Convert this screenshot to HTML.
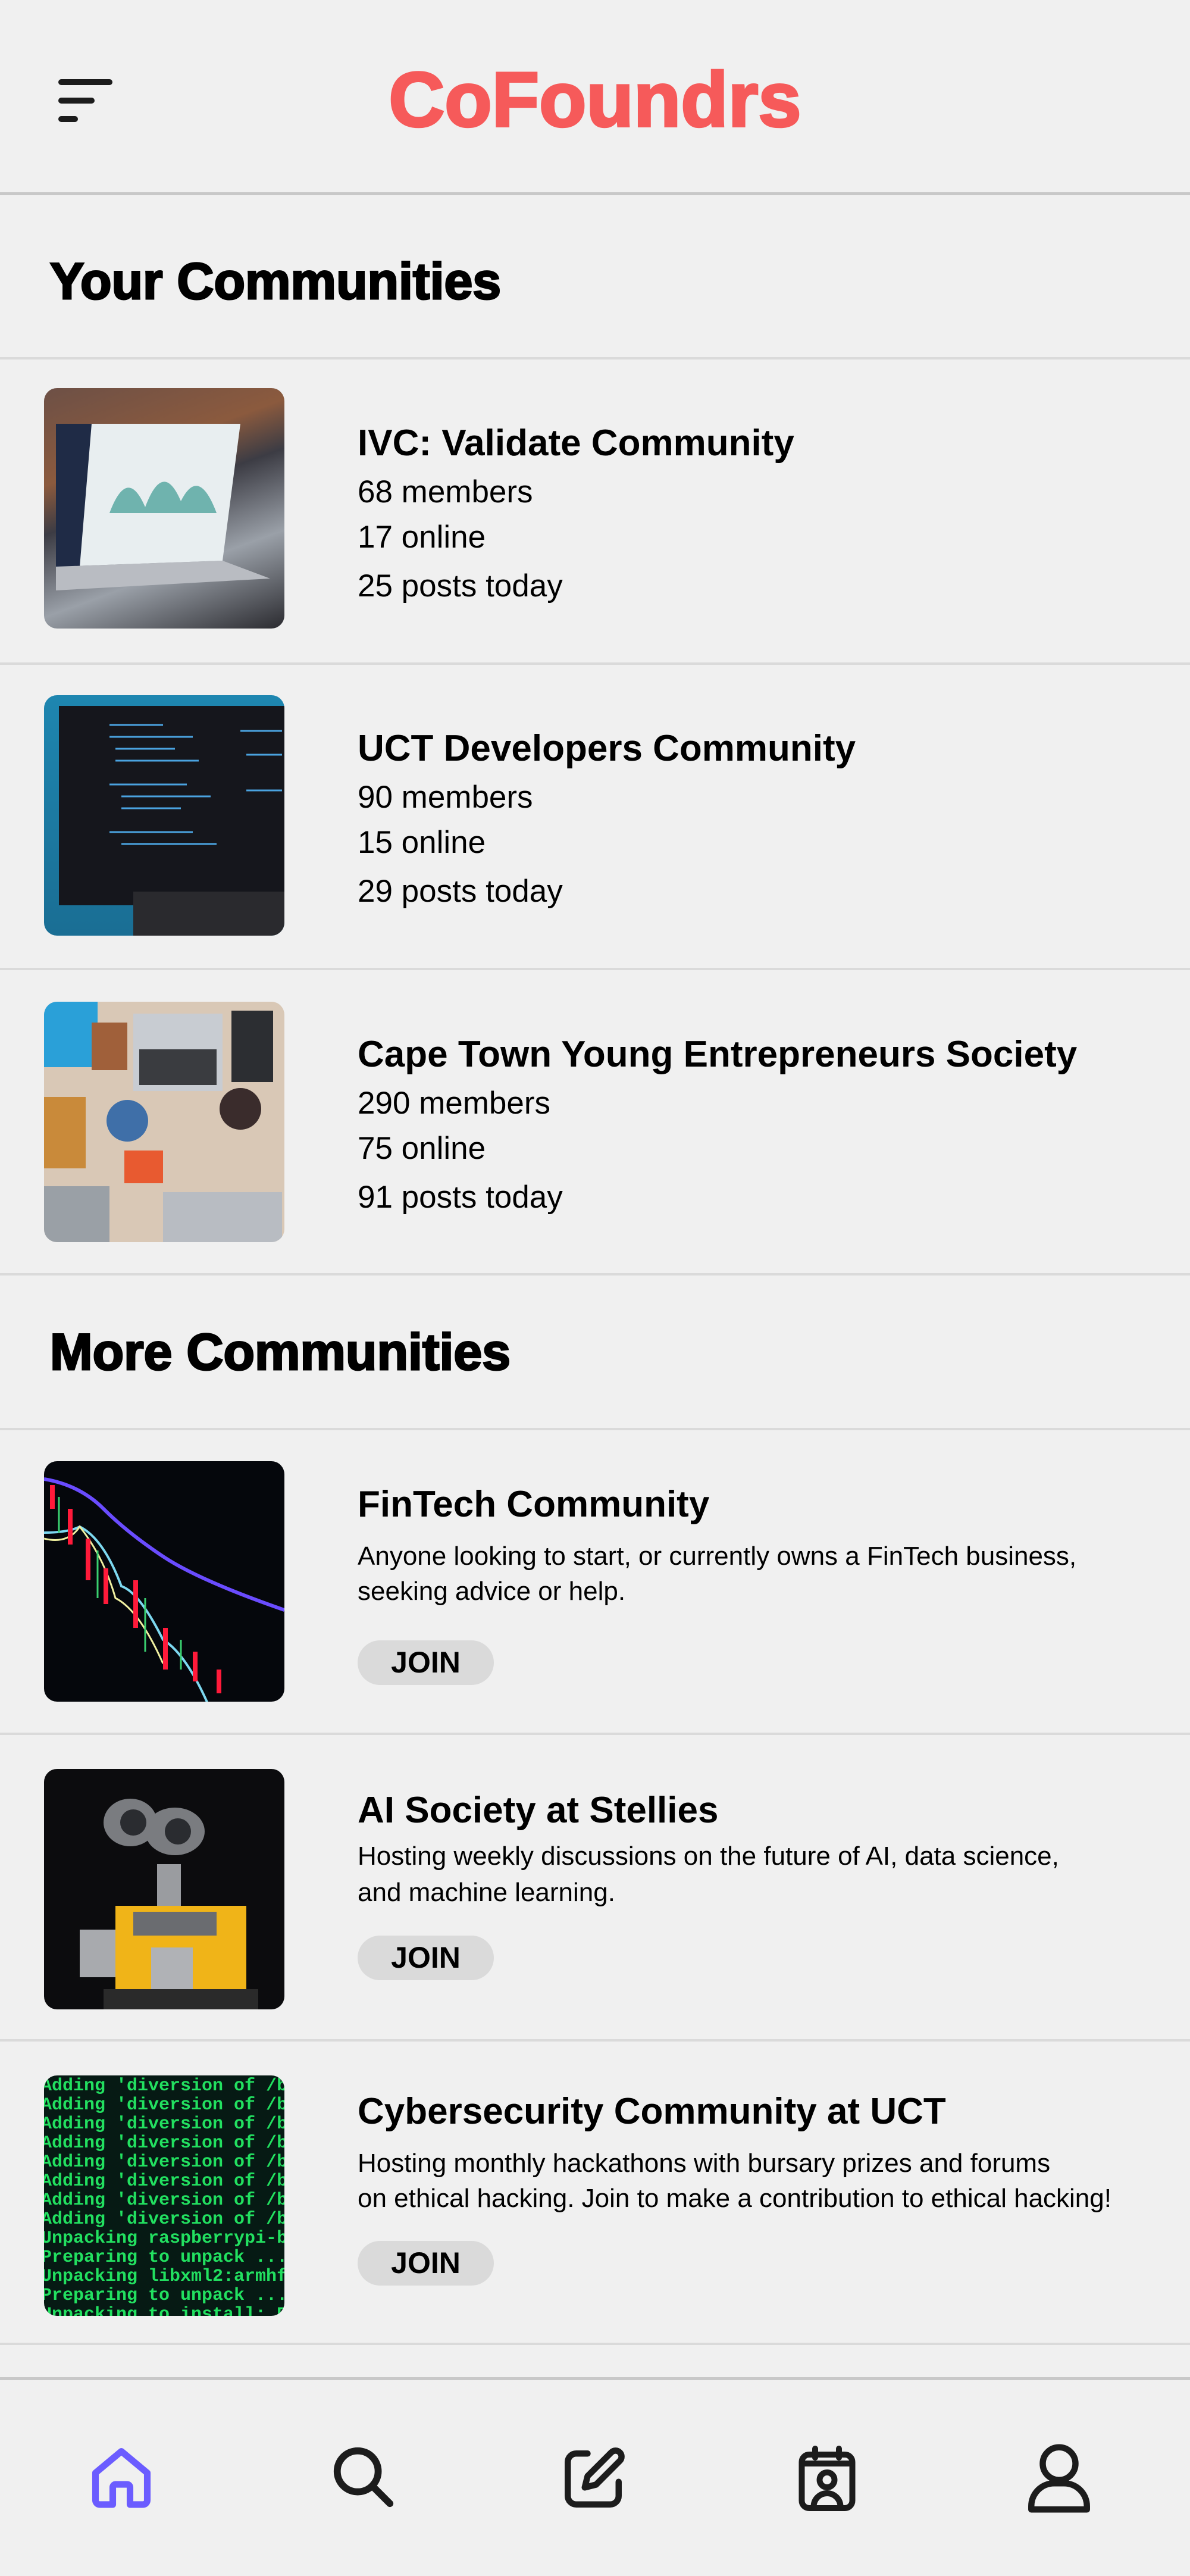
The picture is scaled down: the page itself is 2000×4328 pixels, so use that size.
<!DOCTYPE html>
<html><head><meta charset="utf-8">
<style>
*{margin:0;padding:0;box-sizing:border-box}
html,body{width:2000px;height:4328px;background:#f0f0f0;overflow:hidden;font-family:"Liberation Sans",sans-serif;color:#000}
.abs{position:absolute}
.hr{position:absolute;left:0;width:2000px;height:4px;background:#dadada}
.logo{position:absolute;left:0;width:2000px;top:97px;text-align:center;font-size:130px;font-weight:900;color:#f65a5a;letter-spacing:0px;line-height:140px;-webkit-text-stroke:4px #f65a5a}
.h2{position:absolute;left:84px;font-size:86px;font-weight:900;letter-spacing:0px;line-height:1;-webkit-text-stroke:3px #000}
.img{position:absolute;left:74px;width:404px;height:404px;border-radius:22px;overflow:hidden}
.t{position:absolute;left:601px;font-size:62px;font-weight:700;line-height:1;white-space:nowrap}
.s{position:absolute;left:601px;font-size:53px;line-height:1;white-space:nowrap}
.d{position:absolute;left:601px;font-size:44px;line-height:1;white-space:nowrap}
.join{position:absolute;left:601px;width:229px;height:75px;border-radius:38px;background:#dadada;font-size:50px;font-weight:700;text-align:center;line-height:75px}
svg.ic{position:absolute}
</style></head><body>

<div class="abs" style="left:98px;top:133px;width:91px;height:10px;border-radius:5px;background:#1c1c1c"></div>
<div class="abs" style="left:98px;top:164px;width:61px;height:10px;border-radius:5px;background:#1c1c1c"></div>
<div class="abs" style="left:98px;top:195px;width:33px;height:10px;border-radius:5px;background:#1c1c1c"></div>
<div class="logo">CoFoundrs</div>
<div class="hr" style="top:323px;height:5px;background:#c8c8c8"></div>

<div class="h2" style="top:430px">Your Communities</div>
<div class="hr" style="top:600px"></div>

<div class="img" style="top:652px;background:linear-gradient(160deg,#6d5046 0%,#8b5a3e 30%,#3c3c44 45%,#9aa0a8 70%,#2b2b30 100%)">
<svg width="404" height="404" viewBox="0 0 404 404"><polygon points="20,60 330,60 300,290 20,300" fill="#e8eef0"/><polygon points="20,60 80,60 60,300 20,300" fill="#1f2b46"/><path d="M110 210 Q140 130 170 200 Q200 120 230 190 Q260 130 290 210 Z" fill="#6fb3ae"/><polygon points="20,300 300,290 380,320 20,340" fill="#b9bcc2"/></svg></div>
<div class="t" style="top:714px">IVC: Validate Community</div>
<div class="s" style="top:800px">68 members</div>
<div class="s" style="top:876px">17 online</div>
<div class="s" style="top:958px">25 posts today</div>
<div class="hr" style="top:1113px"></div>

<div class="img" style="top:1168px;background:linear-gradient(180deg,#1e86b0,#1a6e94)">
<svg width="404" height="404" viewBox="0 0 404 404"><rect x="25" y="18" width="379" height="335" fill="#15161c"/><g stroke="#4aa3e0" stroke-width="3"><line x1="110" y1="50" x2="200" y2="50"/><line x1="110" y1="70" x2="250" y2="70"/><line x1="120" y1="90" x2="220" y2="90"/><line x1="120" y1="110" x2="260" y2="110"/><line x1="110" y1="150" x2="240" y2="150"/><line x1="130" y1="170" x2="280" y2="170"/><line x1="130" y1="190" x2="230" y2="190"/><line x1="110" y1="230" x2="250" y2="230"/><line x1="130" y1="250" x2="290" y2="250"/><line x1="330" y1="60" x2="400" y2="60"/><line x1="340" y1="100" x2="400" y2="100"/><line x1="340" y1="160" x2="400" y2="160"/></g><rect x="150" y="330" width="254" height="74" fill="#2a2a2e"/></svg></div>
<div class="t" style="top:1227px">UCT Developers Community</div>
<div class="s" style="top:1313px">90 members</div>
<div class="s" style="top:1389px">15 online</div>
<div class="s" style="top:1471px">29 posts today</div>
<div class="hr" style="top:1626px"></div>

<div class="img" style="top:1683px;background:#d9c8b6">
<svg width="404" height="404" viewBox="0 0 404 404"><rect x="0" y="0" width="90" height="110" fill="#2aa0d8"/><rect x="80" y="35" width="60" height="80" fill="#a0603a"/><rect x="150" y="20" width="150" height="130" fill="#c8ccd2"/><rect x="160" y="80" width="130" height="60" fill="#3a3c40"/><rect x="315" y="15" width="70" height="120" fill="#2c2e32"/><rect x="0" y="160" width="70" height="120" fill="#c98a3a"/><circle cx="140" cy="200" r="35" fill="#3f6fa8"/><rect x="135" y="250" width="65" height="55" fill="#e85a30"/><circle cx="330" cy="180" r="35" fill="#3a2c2c"/><rect x="0" y="310" width="110" height="94" fill="#9aa0a6"/><rect x="200" y="320" width="200" height="84" fill="#b8bcc2"/></svg></div>
<div class="t" style="top:1741px">Cape Town Young Entrepreneurs Society</div>
<div class="s" style="top:1827px">290 members</div>
<div class="s" style="top:1903px">75 online</div>
<div class="s" style="top:1985px">91 posts today</div>
<div class="hr" style="top:2139px"></div>

<div class="h2" style="top:2229px">More Communities</div>
<div class="hr" style="top:2399px"></div>

<div class="img" style="top:2455px;background:#05070c">
<svg width="404" height="404" viewBox="0 0 404 404"><path d="M0 70 Q60 80 100 120 T200 200 T404 290" stroke="#6a4cff" stroke-width="6" fill="none" transform="translate(0,-40)"/><path d="M0 150 Q40 150 60 140 Q100 160 130 240 Q160 250 200 330 Q250 360 300 500" stroke="#7dd8f0" stroke-width="4" fill="none" transform="translate(0,-30)"/><path d="M0 150 Q40 160 60 130 Q100 180 120 250 Q160 270 200 360" stroke="#f0f0a0" stroke-width="3" fill="none" transform="translate(0,-20)"/><g fill="#ff1a3a"><rect x="10" y="40" width="8" height="40"/><rect x="40" y="80" width="8" height="60"/><rect x="70" y="130" width="8" height="70"/><rect x="100" y="180" width="8" height="60"/><rect x="150" y="200" width="8" height="80"/><rect x="200" y="280" width="8" height="70"/><rect x="250" y="320" width="8" height="50"/><rect x="290" y="350" width="8" height="40"/></g><g stroke="#3ad070" stroke-width="3"><line x1="25" y1="60" x2="25" y2="120"/><line x1="90" y1="150" x2="90" y2="230"/><line x1="170" y1="230" x2="170" y2="320"/><line x1="230" y1="300" x2="230" y2="350"/></g></svg></div>
<div class="t" style="top:2497px">FinTech Community</div>
<div class="d" style="top:2593px">Anyone looking to start, or currently owns a FinTech business,</div>
<div class="d" style="top:2652px">seeking advice or help.</div>
<div class="join" style="top:2756px">JOIN</div>
<div class="hr" style="top:2911px"></div>

<div class="img" style="top:2972px;background:#0c0c0e">
<svg width="404" height="404" viewBox="0 0 404 404"><ellipse cx="145" cy="90" rx="45" ry="40" fill="#7a7c80"/><ellipse cx="220" cy="105" rx="50" ry="40" fill="#7a7c80"/><circle cx="150" cy="90" r="22" fill="#2a2c30"/><circle cx="225" cy="105" r="22" fill="#2a2c30"/><rect x="190" y="160" width="40" height="90" fill="#9a9ca0"/><rect x="120" y="230" width="220" height="150" fill="#f0b418"/><rect x="150" y="240" width="140" height="40" fill="#6a6c70"/><rect x="60" y="270" width="60" height="80" fill="#a8aaae"/><rect x="180" y="300" width="70" height="104" fill="#b0b2b6"/><rect x="100" y="370" width="260" height="34" fill="#2a2a2a"/></svg></div>
<div class="t" style="top:3011px">AI Society at Stellies</div>
<div class="d" style="top:3097px">Hosting weekly discussions on the future of AI, data science,</div>
<div class="d" style="top:3158px">and machine learning.</div>
<div class="join" style="top:3252px">JOIN</div>
<div class="hr" style="top:3426px"></div>

<div class="img" style="top:3487px;background:#061a14">
<svg width="404" height="404" viewBox="0 0 404 404"><g fill="#22e060" font-family="Liberation Mono,monospace" font-weight="bold" font-size="30"><text x="-5" y="25">Adding 'diversion of /boot/</text><text x="-5" y="57">Adding 'diversion of /boot/</text><text x="-5" y="89">Adding 'diversion of /boot/</text><text x="-5" y="121">Adding 'diversion of /boot/</text><text x="-5" y="153">Adding 'diversion of /boot/</text><text x="-5" y="185">Adding 'diversion of /boot/</text><text x="-5" y="217">Adding 'diversion of /boot/</text><text x="-5" y="249">Adding 'diversion of /boot/</text><text x="-5" y="281">Unpacking raspberrypi-bootl</text><text x="-5" y="313">Preparing to unpack .../18-</text><text x="-5" y="345">Unpacking libxml2:armhf (2.9</text><text x="-5" y="377">Preparing to unpack .../19-</text><text x="-5" y="409">Unpacking to install: Pre</text></g></svg></div>
<div class="t" style="top:3517px">Cybersecurity Community at UCT</div>
<div class="d" style="top:3613px">Hosting monthly hackathons with bursary prizes and forums</div>
<div class="d" style="top:3672px">on ethical hacking. Join to make a contribution to ethical hacking!</div>
<div class="join" style="top:3765px">JOIN</div>
<div class="hr" style="top:3936px"></div>

<div class="hr" style="top:3994px;height:5px;background:#c8c8c8"></div>
<svg class="ic" style="left:146px;top:4100px" width="116" height="124" viewBox="0 0 24 24" fill="none" stroke="#6b5cff" stroke-width="2.3" stroke-linecap="round" stroke-linejoin="round"><path d="M3 10.5 12 3l9 7.5V20a1.5 1.5 0 0 1-1.5 1.5H15v-6a1 1 0 0 0-1-1h-4a1 1 0 0 0-1 1v6H4.5A1.5 1.5 0 0 1 3 20z"/></svg>
<svg class="ic" style="left:552px;top:4103px" width="118" height="118" viewBox="0 0 24 24" fill="none" stroke="#1c1c1c" stroke-width="2.4" stroke-linecap="round"><circle cx="10" cy="10" r="7"/><path d="M15.2 15.2 21 21"/></svg>
<svg class="ic" style="left:940px;top:4108px" width="114" height="114" viewBox="0 0 24 24" fill="none" stroke="#1c1c1c" stroke-width="2.2" stroke-linecap="round" stroke-linejoin="round"><path d="M10 3H6a3 3 0 0 0-3 3v12a3 3 0 0 0 3 3h12a3 3 0 0 0 3-3v-5"/><path d="M18.4 2.6a2 2 0 0 1 3 3L13 14l-4 1 1-4z"/></svg>
<svg class="ic" style="left:1330px;top:4104px" width="120" height="120" viewBox="0 0 24 24" fill="none" stroke="#1c1c1c" stroke-width="2" stroke-linecap="round" stroke-linejoin="round"><rect x="3.5" y="4" width="17" height="18" rx="2.5"/><path d="M8 2v3M16 2v3M3.5 7h17"/><circle cx="12" cy="12.5" r="2.5"/><path d="M7.5 21.5a4.5 4.5 0 0 1 9 0"/></svg>
<svg class="ic" style="left:1714px;top:4098px" width="132" height="132" viewBox="0 0 24 24" fill="none" stroke="#1c1c1c" stroke-width="1.9" stroke-linecap="round" stroke-linejoin="round"><circle cx="12" cy="7.5" r="5"/><path d="M3.5 21.5v-1a7 7 0 0 1 7-7h3a7 7 0 0 1 7 7v1z"/></svg>

</body></html>
